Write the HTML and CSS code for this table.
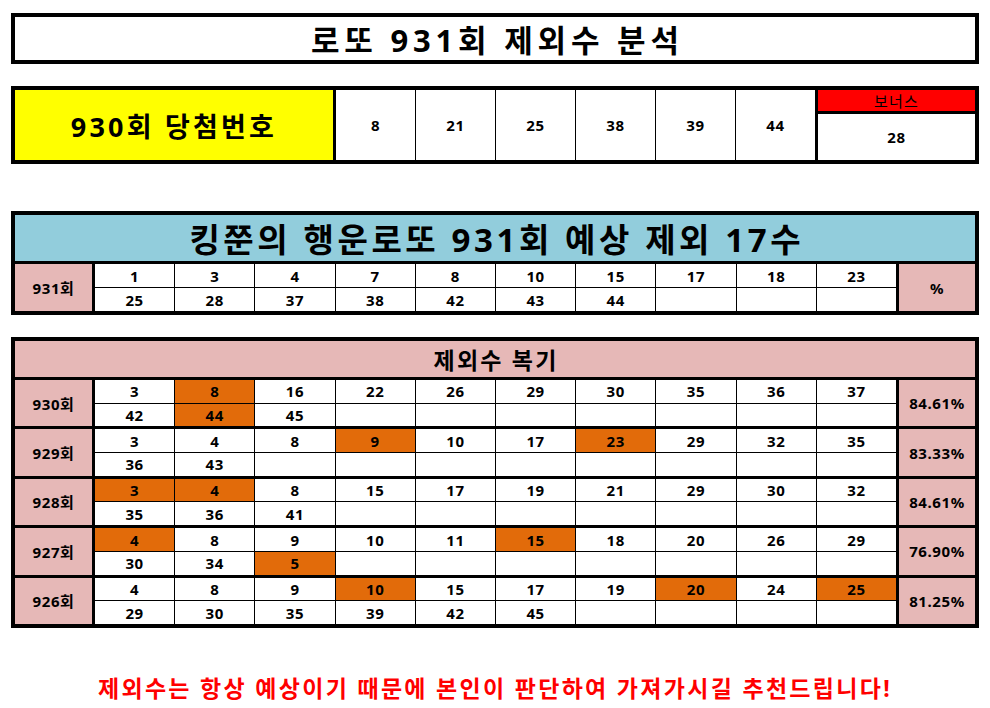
FILE: index.html
```html
<!DOCTYPE html>
<html lang="ko">
<head>
<meta charset="utf-8">
<title>로또 931회 제외수 분석</title>
<link rel="stylesheet" href="styles.css">
</head>
<body>
<div class="page">
  <div class="title">로또 931회 제외수 분석</div>

  <div class="win">
    <div class="win-label">930회 당첨번호</div>
    <div class="win-nums">
      <div>8</div><div>21</div><div>25</div><div>38</div><div>39</div><div>44</div>
    </div>
    <div class="bonus">
      <div class="bonus-h">보너스</div>
      <div class="bonus-v">28</div>
    </div>
  </div>

  <div class="panel p17">
    <div class="p-head blue">킹쭌의 행운로또 931회 예상 제외 17수</div>
    <div class="block">
      <div class="label">931회</div>
      <div class="cells">
        <div>1</div><div>3</div><div>4</div><div>7</div><div>8</div><div>10</div><div>15</div><div>17</div><div>18</div><div>23</div>
        <div>25</div><div>28</div><div>37</div><div>38</div><div>42</div><div>43</div><div>44</div><div></div><div></div><div></div>
      </div>
      <div class="pct">%</div>
    </div>
  </div>

  <div class="panel review">
    <div class="p-head pink small">제외수 복기</div>
    <div class="block">
      <div class="label">930회</div>
      <div class="cells">
        <div>3</div><div class="o">8</div><div>16</div><div>22</div><div>26</div><div>29</div><div>30</div><div>35</div><div>36</div><div>37</div>
        <div>42</div><div class="o">44</div><div>45</div><div></div><div></div><div></div><div></div><div></div><div></div><div></div>
      </div>
      <div class="pct">84.61%</div>
    </div>
    <div class="block">
      <div class="label">929회</div>
      <div class="cells">
        <div>3</div><div>4</div><div>8</div><div class="o">9</div><div>10</div><div>17</div><div class="o">23</div><div>29</div><div>32</div><div>35</div>
        <div>36</div><div>43</div><div></div><div></div><div></div><div></div><div></div><div></div><div></div><div></div>
      </div>
      <div class="pct">83.33%</div>
    </div>
    <div class="block">
      <div class="label">928회</div>
      <div class="cells">
        <div class="o">3</div><div class="o">4</div><div>8</div><div>15</div><div>17</div><div>19</div><div>21</div><div>29</div><div>30</div><div>32</div>
        <div>35</div><div>36</div><div>41</div><div></div><div></div><div></div><div></div><div></div><div></div><div></div>
      </div>
      <div class="pct">84.61%</div>
    </div>
    <div class="block">
      <div class="label">927회</div>
      <div class="cells">
        <div class="o">4</div><div>8</div><div>9</div><div>10</div><div>11</div><div class="o">15</div><div>18</div><div>20</div><div>26</div><div>29</div>
        <div>30</div><div>34</div><div class="o">5</div><div></div><div></div><div></div><div></div><div></div><div></div><div></div>
      </div>
      <div class="pct">76.90%</div>
    </div>
    <div class="block">
      <div class="label">926회</div>
      <div class="cells">
        <div>4</div><div>8</div><div>9</div><div class="o">10</div><div>15</div><div>17</div><div>19</div><div class="o">20</div><div>24</div><div class="o">25</div>
        <div>29</div><div>30</div><div>35</div><div>39</div><div>42</div><div>45</div><div></div><div></div><div></div><div></div>
      </div>
      <div class="pct">81.25%</div>
    </div>
  </div>

  <div class="note">제외수는 항상 예상이기 때문에 본인이 판단하여 가져가시길 추천드립니다!</div>
</div>
</body>
</html>
```
FILE: styles.css
```css
html, body {
  margin: 0;
  padding: 0;
  background: #fff;
}
body {
  font-family: "Noto Sans", "Noto Sans CJK KR", sans-serif;
  font-weight: 700;
  color: #000;
}
.page {
  width: 968px;
  padding: 13px 0 0 11px;
}
.title {
  height: 43px;
  border: 4px solid #000;
  display: flex;
  align-items: center;
  justify-content: center;
  font-size: 31px;
  letter-spacing: 4.8px;
  padding-left: 4.8px;
}
.win {
  margin-top: 22px;
  height: 70px;
  border: 4px solid #000;
  display: flex;
}
.win-label {
  width: 318px;
  background: #ffff00;
  border-right: 3px solid #000;
  display: flex;
  align-items: center;
  justify-content: center;
  font-size: 27px;
  letter-spacing: 3.2px;
}
.win-nums {
  flex: 1;
  display: grid;
  grid-template-columns: repeat(6, 1fr);
  gap: 1px;
  background: #000;
}
.win-nums > div,
.bonus-v {
  background: #fff;
  display: flex;
  align-items: center;
  justify-content: center;
  font-size: 15px;
  letter-spacing: 0.6px;
}
.bonus {
  width: 157px;
  border-left: 3px solid #000;
  display: flex;
  flex-direction: column;
}
.bonus-h {
  height: 21px;
  background: #ff0000;
  border-bottom: 3px solid #000;
  display: flex;
  align-items: center;
  justify-content: center;
  font-size: 15px;
  font-weight: 400;
  letter-spacing: 1.2px;
}
.bonus-v {
  flex: 1;
}
.panel {
  border: 4px solid #000;
  background: #fff;
}
.p17 {
  margin-top: 47px;
}
.review {
  margin-top: 22px;
}
.p-head {
  height: 46px;
  border-bottom: 3px solid #000;
  display: flex;
  align-items: center;
  justify-content: center;
  font-size: 33px;
  letter-spacing: 3.6px;
  padding-left: 3.6px;
}
.p-head.small {
  height: 36px;
  font-size: 23px;
  letter-spacing: 2.2px;
  padding-left: 2.2px;
}
.blue {
  background: #92cddc;
}
.pink {
  background: #e6b8b7;
}
.block {
  display: flex;
  height: 47px;
}
.review .block {
  height: 46.4px;
}
.review .block + .block {
  border-top: 3px solid #000;
}
.label,
.pct {
  background: #e6b8b7;
  display: flex;
  align-items: center;
  justify-content: center;
  font-size: 15px;
  letter-spacing: 0.6px;
}
.label {
  width: 77px;
  border-right: 3px solid #000;
}
.pct {
  width: 76px;
  border-left: 3px solid #000;
}
.cells {
  flex: 1;
  display: grid;
  grid-template-columns: repeat(10, 1fr);
  grid-template-rows: 1fr 1fr;
  gap: 1px;
  background: #000;
}
.cells > div {
  background: #fff;
  display: flex;
  align-items: center;
  justify-content: center;
  font-size: 15px;
  letter-spacing: 0.6px;
}
.cells > div.o {
  background: #e26b0a;
}
.note {
  margin-top: 45px;
  line-height: 30px;
  text-align: center;
  color: #ff0000;
  font-size: 23px;
  letter-spacing: 2.3px;
}
```
